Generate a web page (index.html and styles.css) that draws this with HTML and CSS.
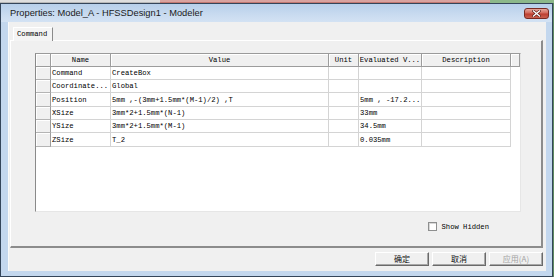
FILE: index.html
```html
<!doctype html>
<html lang="en">
<head>
    <meta charset="UTF-8">
    <title>Properties: Model_A - HFSSDesign1 - Modeler</title>
    <link rel="stylesheet" href="styles.css">
</head>
<body>
<div class="screen">
    <div class="backdrop">
        <div class="bd-grey"></div>
        <div class="bd-red"></div>
        <div class="bd-green"></div>
    </div>
    <div class="window">
        <div class="titlebar">
            <span class="title">Properties: Model_A - HFSSDesign1 - Modeler</span>
            <span class="close">
                <svg width="9" height="7" viewBox="0 0 9 7">
                    <path d="M1.5 1 L7.5 6 M7.5 1 L1.5 6" stroke="#5a1d16" stroke-width="2.6" stroke-linecap="square"/>
                    <path d="M1.5 1 L7.5 6 M7.5 1 L1.5 6" stroke="#fff" stroke-width="1.4" stroke-linecap="square"/>
                </svg>
            </span>
        </div>
        <div class="client">
            <div class="tabs">
                <div class="tab">Command</div>
            </div>
            <div class="panel">
                <div class="grid">
                    <div class="hd"></div>
                    <div class="hd">Name</div>
                    <div class="hd">Value</div>
                    <div class="hd">Unit</div>
                    <div class="hd">Evaluated V...</div>
                    <div class="hd">Description</div>
                    <div class="hd"></div>

                    <div class="rh"></div>
                    <div class="cell">Command</div>
                    <div class="cell">CreateBox</div>
                    <div class="cell"></div>
                    <div class="cell"></div>
                    <div class="cell"></div>
                    <div class="fill"></div>

                    <div class="rh"></div>
                    <div class="cell">Coordinate...</div>
                    <div class="cell">Global</div>
                    <div class="cell"></div>
                    <div class="cell"></div>
                    <div class="cell"></div>
                    <div class="fill"></div>

                    <div class="rh"></div>
                    <div class="cell">Position</div>
                    <div class="cell">5mm ,-(3mm+1.5mm*(M-1)/2) ,T</div>
                    <div class="cell"></div>
                    <div class="cell">5mm , -17.2...</div>
                    <div class="cell"></div>
                    <div class="fill"></div>

                    <div class="rh"></div>
                    <div class="cell">XSize</div>
                    <div class="cell">3mm*2+1.5mm*(N-1)</div>
                    <div class="cell"></div>
                    <div class="cell">33mm</div>
                    <div class="cell"></div>
                    <div class="fill"></div>

                    <div class="rh"></div>
                    <div class="cell">YSize</div>
                    <div class="cell">3mm*2+1.5mm*(M-1)</div>
                    <div class="cell"></div>
                    <div class="cell">34.5mm</div>
                    <div class="cell"></div>
                    <div class="fill"></div>

                    <div class="rh"></div>
                    <div class="cell">ZSize</div>
                    <div class="cell">T_2</div>
                    <div class="cell"></div>
                    <div class="cell">0.035mm</div>
                    <div class="cell"></div>
                    <div class="fill"></div>
                </div>
                <div class="options">
                    <label class="show-hidden"><span class="check"></span>Show Hidden</label>
                </div>
            </div>
            <div class="buttons">
                <button class="btn">确定</button>
                <button class="btn">取消</button>
                <button class="btn disabled">应用(A)</button>
            </div>
        </div>
    </div>
</div>
</body>
</html>
```

FILE: styles.css
```css
* { margin: 0; padding: 0; box-sizing: border-box; }
html, body { width: 100%; height: 100%; }
body { background: #5f8c62; font-family: "Liberation Mono", monospace; }

.screen { width: 554px; height: 277px; display: flex; flex-direction: column; }

/* other windows peeking above the dialog */
.backdrop { height: 3px; display: flex; }
.bd-grey { width: 160px; background: #dedede; border-bottom: 1px solid #b8b8b8; }
.bd-red { width: 330px; background: #d9a3a0; border-bottom: 1px solid #c27872; }
.bd-green { flex: 1; background: #8cb88a; }

.window {
    width: 553px; height: 274px;
    border: 1px solid #34455a;
    background: #c3d7ee;
    display: flex; flex-direction: column;
}

.titlebar {
    height: 18px;
    display: flex; align-items: center;
    padding: 0 3px 1px 9px;
    background: linear-gradient(#b7cfea, #c9dbf0 60%, #d3e2f3);
}
.title { font-family: "Liberation Sans", Arial, sans-serif; font-size: 9.3px; color: #1b1b1b; flex: 1; }
.close {
    width: 25px; height: 11px; margin-top: 1px;
    border: 1px solid #7a2b22; border-radius: 3px;
    background: linear-gradient(#e5a69b, #d2685a 45%, #bd3f30 55%, #c9604f);
    display: flex; align-items: center; justify-content: center;
}

.client {
    height: 249px;
    margin: 0 6px 0 7px;
    background: #f0f0f0;
    border-left: 1px solid #fafafa;
    padding: 5px 3px 0 1px;
    display: flex; flex-direction: column;
}

.tabs { display: flex; padding-left: 3px; height: 13px; }
.tab {
    position: relative; z-index: 1;
    width: 40px; height: 14px;
    padding: 1px 0 0 3px;
    background: #f4f4f4;
    border-top: 1px solid #fff; border-left: 1px solid #fff;
    border-right: 1px solid #8a8a8a;
    font-size: 7.2px; line-height: 10px; color: #000;
}

.panel {
    height: 208px;
    border-top: 1px solid #fff; border-left: 1px solid #fff;
    border-right: 2px solid #8c8c8c; border-bottom: 2px solid #8c8c8c;
    padding: 12px 0 0 24px;
    display: flex; flex-direction: column;
}

.grid {
    width: 486px; height: 159px;
    background: #fff;
    border-top: 1px solid #9a9a9a; border-left: 1px solid #8a8a8a;
    border-right: 1px solid #e6e6e6; border-bottom: 1px solid #e6e6e6;
    display: grid;
    grid-template-columns: 15px 60px 218px 30px 63px 89px 1fr;
    grid-template-rows: 13px 13px 13px 14px 13px 13px 14px;
    align-content: start;
    font-size: 7.2px; color: #000;
}
.hd, .rh, .cell { display: flex; align-items: center; white-space: nowrap; overflow: hidden; }
.hd {
    justify-content: center;
    background: #f0f0f0;
    border-right: 1px solid #9c9c9c; border-bottom: 1px solid #9c9c9c;
    box-shadow: inset 1px 1px #fff;
}
.rh {
    background: #f0f0f0;
    border-right: 1px solid #9c9c9c; border-bottom: 1px solid #b4b4b4;
    box-shadow: inset 1px 1px #fff;
}
.cell {
    padding-left: 1px;
    border-right: 1px solid #d4d4d4; border-bottom: 1px solid #d4d4d4;
}

.options { display: flex; justify-content: flex-end; padding: 10px 52px 0 0; }
.show-hidden { display: flex; align-items: center; gap: 5px; font-size: 7.2px; color: #000; }
.check {
    width: 9px; height: 9px;
    background: #fff;
    border: 1px solid #8e8f8f;
    box-shadow: inset 1px 1px #d8d8d8;
}

.buttons { display: flex; justify-content: flex-end; gap: 3px; padding: 4px 0 0 0; }
.btn {
    width: 54px; height: 14px;
    background: #f0f0f0;
    border: 1px solid; border-color: #fff #6a6a6a #6a6a6a #fff;
    box-shadow: inset -1px -1px #a8a8a8;
    font-family: "Noto Sans CJK SC", sans-serif; font-size: 8px; line-height: 10px; color: #111;
}
.btn.disabled { color: #a3a3a3; }
```
